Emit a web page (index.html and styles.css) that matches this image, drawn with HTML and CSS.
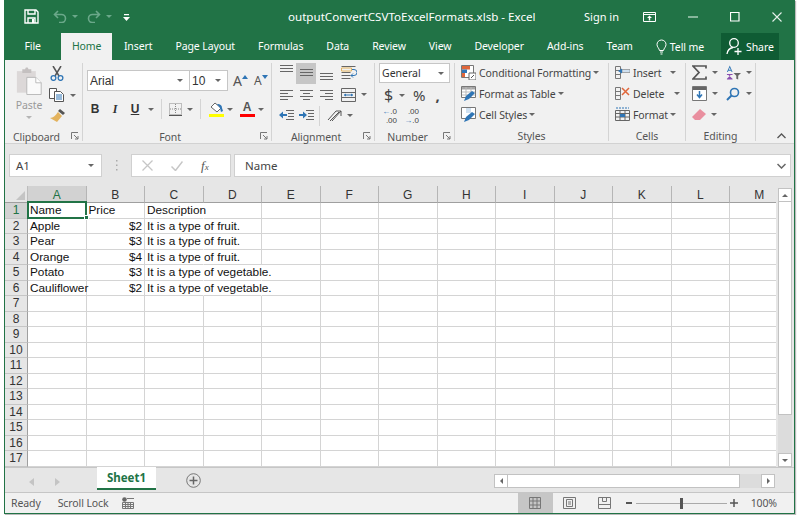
FILE: index.html
```html
<!DOCTYPE html>
<html lang="en">
<head>
<meta charset="utf-8">
<title>outputConvertCSVToExcelFormats.xlsb - Excel</title>
<link rel="stylesheet" href="styles.css">
</head>
<body>
<div class="window">
  <header class="titlebar">
    <div class="qat">
      <svg class="qat-save" width="15" height="15" viewBox="0 0 15 15"><path d="M1 1h11l2 2v11H1z" fill="none" stroke="#fff" stroke-width="1.400"/><path d="M4 1v4h7V1M4 14V9h7v5" fill="none" stroke="#fff" stroke-width="1.400"/><path d="M8 10h2v4H8z" fill="#fff"/></svg>
      <svg class="qat-undo" width="14" height="13" viewBox="0 0 14 13"><path d="M5 1L1.500 4.500 5 8M2 4.500h6.500a4 4 0 0 1 0 8H6" fill="none" stroke="#6ba88a" stroke-width="1.600"/></svg>
      <i class="caret dim"></i>
      <svg class="qat-redo" width="14" height="13" viewBox="0 0 14 13"><path d="M9 1l3.500 3.500L9 8M12 4.500H5.500a4 4 0 0 0 0 8H8" fill="none" stroke="#6ba88a" stroke-width="1.600"/></svg>
      <i class="caret dim"></i>
      <svg class="qat-more" width="7" height="8" viewBox="0 0 7 8"><path d="M1 1h5v1.300H1zM0 4h7L3.500 8z" fill="#fff"/></svg>
    </div>
    <div class="doc-title">outputConvertCSVToExcelFormats.xlsb - Excel</div>
    <div class="winctl">
      <span class="signin">Sign in</span>
      <svg class="ctl-ribbon" width="13" height="10" viewBox="0 0 13 10"><path d="M.5.500h12v9H.500zM.500 2.500h12" fill="none" stroke="#fff"/><path d="M6.500 3.500L4 6h1.800v2.500h1.400V6H9z" fill="#fff"/></svg>
      <svg class="ctl-min" width="10" height="2" viewBox="0 0 10 2"><path d="M0 1h10" stroke="#a9cdb9" stroke-width="1.500"/></svg>
      <svg class="ctl-max" width="10" height="10" viewBox="0 0 10 10"><path d="M.5.500h8.500v8.500H.500z" fill="none" stroke="#fff" stroke-width="1.200"/></svg>
      <svg class="ctl-close" width="10" height="10" viewBox="0 0 10 10"><path d="M.5.500l9 9M9.500.500l-9 9" stroke="#e5f0ea" stroke-width="1.100"/></svg>
    </div>
  </header>

  <nav class="tabs">
    <span class="tab tab-file">File</span>
    <span class="tab active">Home</span>
    <span class="tab">Insert</span>
    <span class="tab">Page Layout</span>
    <span class="tab">Formulas</span>
    <span class="tab">Data</span>
    <span class="tab">Review</span>
    <span class="tab">View</span>
    <span class="tab">Developer</span>
    <span class="tab">Add-ins</span>
    <span class="tab">Team</span>
    <span class="tab tell">
      <svg width="11" height="16" viewBox="0 0 11 16"><path d="M3.500 11.500C3 9 1 8 1 5.500a4.500 4.500 0 0 1 9 0C10 8 8 9 7.500 11.500zM4 13h3M4.500 15h2" fill="none" stroke="#fff"/></svg>
      Tell me
    </span>
    <span class="share">
      <svg width="18" height="19" viewBox="0 0 18 19"><circle cx="8" cy="6" r="4.300" fill="none" stroke="#fff" stroke-width="1.300"/><path d="M1 17c.5-4 3-6 6-6.500M12 11v7M8.500 14.500h7" fill="none" stroke="#fff" stroke-width="1.300"/></svg>
      Share
    </span>
  </nav>

  <section class="ribbon">
    <div class="group g-clip">
      <div class="gbody clip-body">
        <div class="paste">
          <svg width="27" height="28" viewBox="0 0 30 30"><path d="M1 4h21v24H1z" fill="#dcd8d8"/><path d="M7 2h3l1-2h2l1 2h3v4H7z" fill="#c4c0c0"/><path d="M12 11h10l6 6v13H12z" fill="#fafafa" stroke="#b5b5b5"/><path d="M22 11v6h6" fill="#fff" stroke="#b5b5b5"/></svg>
          <span class="paste-label">Paste</span>
          <i class="caret dim-grey"></i>
        </div>
        <div class="clip-tools">
          <svg width="14" height="15" viewBox="0 0 14 15"><path d="M3 0l6 10M11 0L5 10" stroke="#555" stroke-width="1.500" fill="none"/><circle cx="3.500" cy="12" r="2.400" fill="none" stroke="#2f75b5" stroke-width="1.300"/><circle cx="10.500" cy="12" r="2.400" fill="none" stroke="#2f75b5" stroke-width="1.300"/></svg>
          <div class="clip-copy">
            <svg width="15" height="14" viewBox="0 0 15 14"><path d="M.5.500h7v10h-7z" fill="#fff" stroke="#555"/><path d="M5.500 3.500h6l3 3v7h-9z" fill="#fff" stroke="#555"/><path d="M7 7h6M7 9h6M7 11h6" stroke="#2f75b5"/></svg>
            <i class="caret"></i>
          </div>
          <svg width="15" height="13" viewBox="0 0 15 13"><path d="M10 0l5 4-2 2-5-4z" fill="#555"/><path d="M8 3l4 4-5 6-7-4c3 0 6-3 8-6z" fill="#e3b35e"/></svg>
        </div>
      </div>
      <div class="glabel">Clipboard</div>
      <svg class="launcher" width="8" height="8" viewBox="0 0 8 8"><path d="M.5 7V.500H7M3 3l4 4M7 4v3H4" fill="none" stroke="#777"/></svg>
    </div>

    <div class="group g-font">
      <div class="gbody font-body">
        <div class="font-row1">
          <div class="combo combo-font"><span>Arial</span><i class="caret"></i></div>
          <div class="combo combo-size"><span>10</span><i class="caret"></i></div>
          <div class="font-grow">A<svg width="6" height="4" viewBox="0 0 6 4"><path d="M3 0l3 4H0z" fill="#2f75b5"/></svg></div>
          <div class="font-shrink">A<svg width="6" height="4" viewBox="0 0 6 4"><path d="M3 4L0 0h6z" fill="#2f75b5"/></svg></div>
        </div>
        <div class="font-row2">
          <span class="fmt fmt-b">B</span>
          <span class="fmt fmt-i">I</span>
          <span class="fmt fmt-u">U</span>
          <i class="caret caret-u"></i>
          <i class="vsep"></i>
          <svg class="ic-border" width="13" height="13" viewBox="0 0 13 13"><path d="M.5.500h12v11H.500z" fill="none" stroke="#888" stroke-dasharray="1 1"/><path d="M6.500 1v10M1 6h11" stroke="#888" stroke-dasharray="1 1"/><path d="M0 12.500h13" stroke="#555"/></svg>
          <i class="caret caret-b"></i>
          <i class="vsep vsep-fill"></i>
          <span class="color-btn">
            <svg width="15" height="11" viewBox="0 0 15 11"><path d="M6 1l6 5-4 4-6-5z" fill="#fff" stroke="#666"/><path d="M8 2c3 0 5 1 5 4l1 3-2 1-1-4z" fill="#2f75b5"/></svg>
            <b class="bar yellow"></b>
          </span>
          <i class="caret"></i>
          <span class="color-btn color-a">
            <span class="a-glyph">A</span>
            <b class="bar red"></b>
          </span>
          <i class="caret"></i>
        </div>
      </div>
      <div class="glabel">Font</div>
      <svg class="launcher" width="8" height="8" viewBox="0 0 8 8"><path d="M.5 7V.500H7M3 3l4 4M7 4v3H4" fill="none" stroke="#777"/></svg>
    </div>

    <div class="group g-align">
      <div class="gbody align-body">
        <div class="arow">
          <span class="ib"><svg width="13" height="17" viewBox="0 0 13 17"><path d="M0 .500h13M0 3.500h13M0 6.500h13" stroke="#666"/></svg></span>
          <span class="ib ib-on"><svg width="13" height="17" viewBox="0 0 13 17"><path d="M0 4.500h13M0 7.500h13M0 10.500h13" stroke="#666"/></svg></span>
          <span class="ib"><svg width="13" height="17" viewBox="0 0 13 17"><path d="M0 8.500h13M0 11.500h13M0 14.500h13" stroke="#666"/></svg></span>
          <svg class="ic-wrap" width="16" height="15" viewBox="0 0 16 15"><path d="M.5.500h14M.5 6.500h9M.5 9.500h9M.5 12.500h9" stroke="#666"/><path d="M.5 2h10v3H.5z" fill="none" stroke="#e3b35e"/><path d="M11 3.500h2a2 2 0 0 1 0 6h-3l2-2m-2 2l2 2" fill="none" stroke="#2f75b5"/></svg>
        </div>
        <div class="arow">
          <span class="ib"><svg width="13" height="10" viewBox="0 0 13 10"><path d="M0 .500h13M0 3.500h8M0 6.500h13M0 9.500h8" stroke="#666"/></svg></span>
          <span class="ib"><svg width="13" height="10" viewBox="0 0 13 10"><path d="M0 .500h13M3 3.500h7M0 6.500h13M3 9.500h7" stroke="#666"/></svg></span>
          <span class="ib"><svg width="13" height="10" viewBox="0 0 13 10"><path d="M0 .500h13M5 3.500h8M0 6.500h13M5 9.500h8" stroke="#666"/></svg></span>
          <svg class="ic-wrap" width="15" height="14" viewBox="0 0 15 14"><path d="M.5.500h14v13H.500zM.5 4.500h14M.5 9.500h14" fill="none" stroke="#666"/><path d="M3 7h9" stroke="#2f75b5"/><path d="M3 7l2-1.500v3zM12 7l-2-1.500v3z" fill="#2f75b5"/></svg>
          <i class="caret"></i>
        </div>
        <div class="arow">
          <span class="ib"><svg width="15" height="11" viewBox="0 0 15 11"><path d="M7 .500h8M9 3.500h6M9 6.500h6M7 9.500h8" stroke="#666"/><path d="M0 5l4-3.500v2.500h4v2H4v2.500z" fill="#2f75b5"/></svg></span>
          <span class="ib"><svg width="15" height="11" viewBox="0 0 15 11"><path d="M7 .500h8M9 3.500h6M9 6.500h6M7 9.500h8" stroke="#666"/><path d="M8 5L4 1.500V4H0v2h4v2.500z" fill="#2f75b5"/></svg></span>
          <i class="vsep vsep-align"></i>
          <svg class="ic-orient" width="15" height="15" viewBox="0 0 15 15"><path d="M1 12L9 3M3 13l9-9M9 3h5v5M14 3L5 13" fill="none" stroke="#555"/></svg>
          <i class="caret"></i>
        </div>
      </div>
      <div class="glabel">Alignment</div>
      <svg class="launcher" width="8" height="8" viewBox="0 0 8 8"><path d="M.5 7V.500H7M3 3l4 4M7 4v3H4" fill="none" stroke="#777"/></svg>
    </div>

    <div class="group g-num">
      <div class="gbody num-body">
        <div class="combo combo-num"><span>General</span><i class="caret"></i></div>
        <div class="nrow nrow-sym">
          <span class="sym sym-dollar">$</span><i class="caret"></i>
          <span class="sym sym-pct">%</span>
          <span class="sym sym-comma">,</span>
        </div>
        <div class="nrow nrow-dec">
          <span class="dec"><em>←</em>.0<br>.00</span>
          <span class="dec">.00<br><em>→</em>.0</span>
        </div>
      </div>
      <div class="glabel">Number</div>
      <svg class="launcher" width="8" height="8" viewBox="0 0 8 8"><path d="M.5 7V.500H7M3 3l4 4M7 4v3H4" fill="none" stroke="#777"/></svg>
    </div>

    <div class="group g-styles">
      <div class="gbody list-body">
        <div class="litem">
          <svg width="15" height="15" viewBox="0 0 15 15"><path d="M.5.500h12v12H.500z" fill="#fff" stroke="#777"/><path d="M1 1h8v3.500H1z" fill="#e0663a"/><path d="M1 4.500h5V8H1z" fill="#2f75b5"/><path d="M1 8h3v4H1z" fill="#e0663a"/><path d="M8 8h7v7H8z" fill="#fff" stroke="#666"/><path d="M10 13l3-3" stroke="#555"/></svg>
          <span>Conditional Formatting</span><i class="caret"></i>
        </div>
        <div class="litem">
          <svg width="15" height="15" viewBox="0 0 15 15"><path d="M.5.500h14v11H.500z" fill="#fff" stroke="#777"/><path d="M1 1h13v2.500H1z" fill="#a6a6a6"/><path d="M5 1v10M10 1v10M1 6h13M1 9h13" stroke="#bbb"/><path d="M3 15l2-5 6-5 3 2-6 6z" fill="#2f75b5"/></svg>
          <span>Format as Table</span><i class="caret"></i>
        </div>
        <div class="litem">
          <svg width="15" height="15" viewBox="0 0 15 15"><path d="M.5.500h14v11H.500z" fill="#fff" stroke="#777"/><path d="M5 1l5 0v5H5z" fill="#cfe0f0"/><path d="M3 15l2-5 6-5 3 2-6 6z" fill="#2f75b5"/></svg>
          <span>Cell Styles</span><i class="caret"></i>
        </div>
      </div>
      <div class="glabel">Styles</div>
    </div>

    <div class="group g-cells">
      <div class="gbody list-body">
        <div class="litem">
          <svg width="15" height="15" viewBox="0 0 15 15"><path d="M.5 1.500h5v12h-5zM.5 5.500h5M.5 9.500h5" fill="none" stroke="#777"/><path d="M7 4.500h8v3H7z" fill="#cfe0f0" stroke="#777" stroke-width=".6"/><path d="M3 6l4-2.500v5z" fill="#2f75b5"/></svg>
          <span class="cell-insert">Insert</span><i class="caret"></i>
        </div>
        <div class="litem">
          <svg width="15" height="15" viewBox="0 0 15 15"><path d="M.5 1.500h5v12h-5zM.5 5.500h5M.5 9.500h5" fill="none" stroke="#777"/><path d="M7 2l7 7M14 2L7 9" stroke="#e0663a" stroke-width="1.500"/></svg>
          <span class="cell-delete">Delete</span><i class="caret"></i>
        </div>
        <div class="litem">
          <svg width="15" height="15" viewBox="0 0 15 15"><path d="M.5 3.500h14v10H.500zM.5 6.500h14M.5 10h14M5 3.500v10M10 3.500v10" fill="none" stroke="#666"/><path d="M1 1h13" stroke="#2f75b5" stroke-dasharray="2 1"/><path d="M5 7h5v3H5z" fill="#2f75b5"/></svg>
          <span>Format</span><i class="caret"></i>
        </div>
      </div>
      <div class="glabel">Cells</div>
    </div>

    <div class="group g-edit">
      <div class="gbody edit-body">
        <div class="erow">
          <svg class="e1" width="15" height="15" viewBox="0 0 15 15"><path d="M14 3.500V1H1l6 6.500L1 14h13v-2.500" fill="none" stroke="#555" stroke-width="1.700"/></svg>
          <i class="caret"></i>
          <span class="e2">
            <svg width="16" height="16" viewBox="0 0 16 16"><path d="M8 8h8l-3 3v4l-2-1v-3z" fill="#666"/><path d="M7 9v1H2.500L7 14v1H1v-1l4-4H1V9z" fill="#8a4fb0"/><path d="M4 0l3 7H6l-.500-1.500h-3L2 7H1zM3 4.500h2L4 2z" fill="#2f75b5"/></svg>
          </span>
          <i class="caret"></i>
        </div>
        <div class="erow">
          <svg class="e1" width="15" height="15" viewBox="0 0 15 15"><path d="M.5.500h14v14H.500z" fill="#fff" stroke="#777"/><path d="M1 1h13v3H1z" fill="#666"/><path d="M7.500 5v6M5 8.500l2.500 3 2.500-3" fill="none" stroke="#2f75b5" stroke-width="1.500"/></svg>
          <i class="caret"></i>
          <span class="e2">
            <svg width="14" height="14" viewBox="0 0 14 14"><circle cx="8.500" cy="5.500" r="4" fill="none" stroke="#2f75b5" stroke-width="1.600"/><path d="M5.500 8.500L1 13" stroke="#2f75b5" stroke-width="2"/></svg>
          </span>
          <i class="caret"></i>
        </div>
        <div class="erow">
          <svg class="e1" width="14" height="12" viewBox="0 0 14 12"><path d="M0 8l8-8 6 5-6 6H3z" fill="#e98f9f"/></svg>
          <i class="caret"></i>
        </div>
      </div>
      <div class="glabel">Editing</div>
    </div>
    <svg class="collapse" width="9" height="6" viewBox="0 0 9 6"><path d="M.5 5l4-4 4 4" fill="none" stroke="#555" stroke-width="1.300"/></svg>
  </section>

  <section class="formula">
    <div class="namebox"><span>A1</span><i class="caret"></i></div>
    <svg class="grip" width="3" height="11" viewBox="0 0 3 11"><path d="M1 0h1.500v1.500H1zM1 4.500h1.500V6H1zM1 9h1.500v1.500H1z" fill="#aaa"/></svg>
    <div class="fx-box">
      <svg class="fx-x" width="11" height="11" viewBox="0 0 11 11"><path d="M.5.500l10 10M10.500.500l-10 10" stroke="#c6c6c6" stroke-width="1.300"/></svg>
      <svg class="fx-c" width="12" height="10" viewBox="0 0 12 10"><path d="M.5 5.500l4 4 7-9" fill="none" stroke="#c6c6c6" stroke-width="1.500"/></svg>
      <span class="fx-f">f<small>x</small></span>
    </div>
    <div class="fx-input"><span>Name</span><svg width="9" height="6" viewBox="0 0 9 6"><path d="M.5 1l4 4 4-4" fill="none" stroke="#666" stroke-width="1.500"/></svg></div>
  </section>

  <section class="book">
    <div class="sheet-wrap">
      <div class="sheet">
        <div class="col-heads">
          <div class="corner"><svg width="9" height="9" viewBox="0 0 9 9"><path d="M9 0v9H0z" fill="#c4c4c4"/></svg></div>
          <span class="ch on">A</span><span class="ch">B</span><span class="ch">C</span><span class="ch">D</span><span class="ch">E</span><span class="ch">F</span><span class="ch">G</span><span class="ch">H</span><span class="ch">I</span><span class="ch">J</span><span class="ch">K</span><span class="ch">L</span><span class="ch last">M</span>
        </div>
        <div class="row"><b class="rh on">1</b><span class="c sel">Name</span><span class="c">Price</span><span class="c ov">Description</span><span class="c"></span><span class="c"></span><span class="c"></span><span class="c"></span><span class="c"></span><span class="c"></span><span class="c"></span><span class="c"></span><span class="c"></span><span class="c"></span></div>
        <div class="row"><b class="rh">2</b><span class="c">Apple</span><span class="c r">$2</span><span class="c ov">It is a type of fruit.</span><span class="c"></span><span class="c"></span><span class="c"></span><span class="c"></span><span class="c"></span><span class="c"></span><span class="c"></span><span class="c"></span><span class="c"></span><span class="c"></span></div>
        <div class="row"><b class="rh">3</b><span class="c">Pear</span><span class="c r">$3</span><span class="c ov">It is a type of fruit.</span><span class="c"></span><span class="c"></span><span class="c"></span><span class="c"></span><span class="c"></span><span class="c"></span><span class="c"></span><span class="c"></span><span class="c"></span><span class="c"></span></div>
        <div class="row"><b class="rh">4</b><span class="c">Orange</span><span class="c r">$4</span><span class="c ov">It is a type of fruit.</span><span class="c"></span><span class="c"></span><span class="c"></span><span class="c"></span><span class="c"></span><span class="c"></span><span class="c"></span><span class="c"></span><span class="c"></span><span class="c"></span></div>
        <div class="row"><b class="rh">5</b><span class="c">Potato</span><span class="c r">$3</span><span class="c ov">It is a type of vegetable.</span><span class="c ov"></span><span class="c"></span><span class="c"></span><span class="c"></span><span class="c"></span><span class="c"></span><span class="c"></span><span class="c"></span><span class="c"></span><span class="c"></span></div>
        <div class="row"><b class="rh">6</b><span class="c">Cauliflower</span><span class="c r">$2</span><span class="c ov">It is a type of vegetable.</span><span class="c ov"></span><span class="c"></span><span class="c"></span><span class="c"></span><span class="c"></span><span class="c"></span><span class="c"></span><span class="c"></span><span class="c"></span><span class="c"></span></div>
        <div class="row"><b class="rh">7</b><span class="c"></span><span class="c"></span><span class="c"></span><span class="c"></span><span class="c"></span><span class="c"></span><span class="c"></span><span class="c"></span><span class="c"></span><span class="c"></span><span class="c"></span><span class="c"></span><span class="c"></span></div>
        <div class="row"><b class="rh">8</b><span class="c"></span><span class="c"></span><span class="c"></span><span class="c"></span><span class="c"></span><span class="c"></span><span class="c"></span><span class="c"></span><span class="c"></span><span class="c"></span><span class="c"></span><span class="c"></span><span class="c"></span></div>
        <div class="row"><b class="rh">9</b><span class="c"></span><span class="c"></span><span class="c"></span><span class="c"></span><span class="c"></span><span class="c"></span><span class="c"></span><span class="c"></span><span class="c"></span><span class="c"></span><span class="c"></span><span class="c"></span><span class="c"></span></div>
        <div class="row"><b class="rh">10</b><span class="c"></span><span class="c"></span><span class="c"></span><span class="c"></span><span class="c"></span><span class="c"></span><span class="c"></span><span class="c"></span><span class="c"></span><span class="c"></span><span class="c"></span><span class="c"></span><span class="c"></span></div>
        <div class="row"><b class="rh">11</b><span class="c"></span><span class="c"></span><span class="c"></span><span class="c"></span><span class="c"></span><span class="c"></span><span class="c"></span><span class="c"></span><span class="c"></span><span class="c"></span><span class="c"></span><span class="c"></span><span class="c"></span></div>
        <div class="row"><b class="rh">12</b><span class="c"></span><span class="c"></span><span class="c"></span><span class="c"></span><span class="c"></span><span class="c"></span><span class="c"></span><span class="c"></span><span class="c"></span><span class="c"></span><span class="c"></span><span class="c"></span><span class="c"></span></div>
        <div class="row"><b class="rh">13</b><span class="c"></span><span class="c"></span><span class="c"></span><span class="c"></span><span class="c"></span><span class="c"></span><span class="c"></span><span class="c"></span><span class="c"></span><span class="c"></span><span class="c"></span><span class="c"></span><span class="c"></span></div>
        <div class="row"><b class="rh">14</b><span class="c"></span><span class="c"></span><span class="c"></span><span class="c"></span><span class="c"></span><span class="c"></span><span class="c"></span><span class="c"></span><span class="c"></span><span class="c"></span><span class="c"></span><span class="c"></span><span class="c"></span></div>
        <div class="row"><b class="rh">15</b><span class="c"></span><span class="c"></span><span class="c"></span><span class="c"></span><span class="c"></span><span class="c"></span><span class="c"></span><span class="c"></span><span class="c"></span><span class="c"></span><span class="c"></span><span class="c"></span><span class="c"></span></div>
        <div class="row"><b class="rh">16</b><span class="c"></span><span class="c"></span><span class="c"></span><span class="c"></span><span class="c"></span><span class="c"></span><span class="c"></span><span class="c"></span><span class="c"></span><span class="c"></span><span class="c"></span><span class="c"></span><span class="c"></span></div>
        <div class="row"><b class="rh">17</b><span class="c"></span><span class="c"></span><span class="c"></span><span class="c"></span><span class="c"></span><span class="c"></span><span class="c"></span><span class="c"></span><span class="c"></span><span class="c"></span><span class="c"></span><span class="c"></span><span class="c"></span></div>
      </div>
      <div class="vscroll">
        <span class="sb-btn"><i class="tri up"></i></span>
        <span class="vthumb"></span>
        <span class="sb-track"></span>
        <span class="sb-btn"><i class="tri down"></i></span>
      </div>
    </div>
    <div class="tabstrip">
      <svg class="nav-l" width="5" height="8" viewBox="0 0 5 8"><path d="M5 0v8L0 4z" fill="#c4c4c4"/></svg>
      <svg class="nav-r" width="5" height="8" viewBox="0 0 5 8"><path d="M0 0v8l5-4z" fill="#c4c4c4"/></svg>
      <span class="sheet-tab">Sheet1</span>
      <svg class="add-sheet" width="15" height="15" viewBox="0 0 15 15"><circle cx="7.500" cy="7.500" r="6.800" fill="none" stroke="#777"/><path d="M3.500 7.500h8M7.500 3.500v8" stroke="#666" stroke-width="1.500"/></svg>
      <div class="hscroll">
        <span class="sb-btn"><i class="tri left"></i></span>
        <span class="hthumb"></span>
        <span class="sb-track"></span>
        <span class="sb-btn"><i class="tri right"></i></span>
      </div>
    </div>
  </section>

  <footer class="status">
    <span class="st-ready">Ready</span>
    <span class="st-lock">Scroll Lock</span>
    <svg class="st-macro" width="12" height="12" viewBox="0 0 12 12"><circle cx="2.500" cy="2.500" r="2.300" fill="#666"/><path d="M5 1.500h7M.5 5.500h11v6H.500zM.5 7.500h11M.5 9.500h11M3.500 5.500v6M6 5.500v6M8.500 5.500v6" fill="none" stroke="#777"/></svg>
    <span class="st-views">
      <span class="vw vw-on"><svg width="13" height="12" viewBox="0 0 13 12"><path d="M.5.500h11v11H.500zM4 .500v11M8 .500v11M.5 4h11M.5 8h11" fill="none" stroke="#777"/></svg></span>
      <span class="vw"><svg width="14" height="12" viewBox="0 0 14 12"><path d="M.5.500h12v11H.500z" fill="none" stroke="#777"/><path d="M3.500 2.500h6v7h-6zM5 5h3M5 7h3" fill="none" stroke="#777"/></svg></span>
      <span class="vw"><svg width="13" height="12" viewBox="0 0 13 12"><path d="M.5.500h12v11H.500zM.5 7.500h12M4.500.500v4h4v-4" fill="none" stroke="#777"/></svg></span>
    </span>
    <span class="zoom">
      <i class="z-minus"></i>
      <span class="z-track"><i class="z-thumb"></i></span>
      <svg width="8" height="8" viewBox="0 0 8 8"><path d="M0 4h8M4 0v8" stroke="#555" stroke-width="1.500"/></svg>
      <span class="z-val">100%</span>
    </span>
  </footer>
</div>
</body>
</html>
```
FILE: styles.css
```css
* { box-sizing: border-box; }
html, body { margin: 0; padding: 0; background: #fff; overflow: hidden; }
body { width: 800px; height: 515px; padding-left: 4px; font-family: "Noto Sans", "Open Sans", sans-serif; }
i, b { display: block; font-style: normal; font-weight: normal; }

.window { width: 791px; height: 514px; display: flex; flex-direction: column; border: solid #217346; border-width: 0 1px 1px 1px; background: #f1f1f1; overflow: hidden; box-shadow: 1px 1px 1px #bbb; }

.caret { width: 0; height: 0; border: 3px solid transparent; border-top: 3px solid #666; border-bottom: 0; flex: none; }
.caret.dim { border-top-color: #6ba88a; }
.caret.dim-grey { border-top-color: #b5b5b5; }

/* title bar */
.titlebar { height: 33px; flex: none; background: #217346; display: flex; align-items: center; color: #fff; font-size: 11px; position: relative; }
.qat { display: flex; align-items: center; padding-left: 19px; width: 283px; }
.qat-undo { margin-left: 14px; }
.qat .caret { margin-left: 5px; }
.qat-redo { margin-left: 9px; }
.qat-more { margin-left: 11px; }
.doc-title { width: 296px; font-size: 11.600px; line-height: 31px; white-space: nowrap; }
.winctl { display: flex; align-items: center; flex: 1; }
.signin { font-size: 11px; line-height: 31px; }
.ctl-ribbon { margin-left: 24px; }
.ctl-min { margin-left: 32px; }
.ctl-max { margin-left: 32px; }
.ctl-close { margin-left: 32px; }

/* tabs */
.tabs { height: 27px; flex: none; background: #217346; display: flex; align-items: stretch; padding-left: 8px; color: #fff; font-size: 10.500px; letter-spacing: -.1px; }
.tab { padding: 0 11.500px; line-height: 26px; white-space: nowrap; }
.tab-file { margin-right: 8.500px; }
.tab.active { background: #f1f1f1; color: #217346; padding: 0 11px; }
.tell { display: flex; align-items: center; gap: 3px; padding-right: 17px; }
.share { width: 58px; background: #0f5c34; display: flex; align-items: center; gap: 2px; padding-left: 5px; line-height: 26px; }

/* ribbon */
.ribbon { height: 84px; flex: none; background: #f1f1f1; border-bottom: 1px solid #d2d2d2; display: flex; color: #444; font-size: 10.500px; letter-spacing: -.1px; position: relative; padding-top: 3px; }
.group { position: relative; flex: none; height: 78px; border-right: 1px solid #d4d4d4; display: flex; flex-direction: column; }
.gbody { height: 63px; flex: none; }
.glabel { text-align: center; font-size: 10.500px; line-height: 14px; margin-top: 4px; color: #555; }
.g-clip .glabel, .g-font .glabel, .g-align .glabel, .g-num .glabel { padding-right: 14px; }
.launcher { position: absolute; right: 3px; bottom: 1px; }
.collapse { position: absolute; right: 8px; bottom: 4px; }
.g-clip { width: 78px; }
.g-font { width: 189px; }
.g-align { width: 103px; }
.g-num { width: 80px; }
.g-styles { width: 154px; }
.g-cells { width: 77px; }
.g-edit { width: 70px; }

/* clipboard */
.clip-body { display: flex; padding-left: 11px; }
.paste { width: 26px; display: flex; flex-direction: column; align-items: center; padding-top: 4px; color: #9a9a9a; flex: none; }
.paste svg { flex: none; }
.paste-label { margin-top: 3px; font-size: 10.500px; line-height: 14px; }
.paste .caret { margin-top: 4px; }
.clip-tools { display: flex; flex-direction: column; gap: 7px; padding: 3px 0 0 8px; }
.clip-copy { display: flex; align-items: center; gap: 6px; margin-left: -1px; }

/* font */
.font-body { padding: 7px 0 0 4px; }
.font-row1 { display: flex; align-items: center; height: 21px; }
.combo { height: 21px; background: #fff; border: 1px solid #c6c6c6; display: flex; align-items: center; justify-content: space-between; padding: 0 6px 0 2px; font-family: "Liberation Sans", sans-serif; font-size: 12px; letter-spacing: 0; color: #333; }
.combo-font { width: 102px; border-right: 0; }
.combo-size { width: 39px; }
.font-grow, .font-shrink { display: flex; align-items: flex-start; font-size: 14px; line-height: 18px; color: #555; }
.font-grow { margin-left: 5px; width: 21px; }
.font-shrink { font-size: 12px; }
.font-grow svg, .font-shrink svg { margin-top: 3px; }
.font-row2 { display: flex; align-items: center; height: 20px; margin-top: 8px; margin-left: -1px; }
.fmt { text-align: center; font-family: "Liberation Sans", sans-serif; font-size: 12px; color: #333; flex: none; }
.fmt-b { font-weight: bold; width: 18px; }
.fmt-i { font-family: "Liberation Serif", serif; font-style: italic; font-weight: bold; width: 22px; }
.fmt-u { text-decoration: underline; font-weight: bold; width: 18px; }
.font-row2 .caret { margin-left: 3px; }
.font-row2 .caret-u { margin-left: 4px; }
.font-row2 .caret-b { margin-left: 5px; }
.vsep { width: 1px; height: 20px; background: #d4d4d4; margin: 0 7px; flex: none; }
.color-btn { width: 16px; display: flex; flex-direction: column; align-items: center; flex: none; }
.color-a { margin-left: 6px; }
.bar { width: 15px; height: 3px; margin-top: 1px; }
.yellow { background: #ff0; }
.red { background: #f00; }
.a-glyph { font-size: 12px; line-height: 11px; font-weight: bold; color: #555; font-family: "Liberation Sans", sans-serif; }

/* alignment */
.arow { height: 21px; display: flex; align-items: center; padding-left: 4px; }
.ib { width: 20px; height: 21px; display: flex; align-items: center; justify-content: center; flex: none; }
.ib-on { background: #c6c6c6; }
.ic-wrap { margin-left: 5px; }
.arow .caret { margin-left: 5px; }
.vsep-align { margin: 0 7px 0 3px; }

/* number */
.num-body { padding: 0 0 0 4px; }
.combo-num { width: 71px; height: 20px; font-family: "Noto Sans", sans-serif; font-size: 10.500px; padding: 0 5px 0 2px; border-color: #c6c6c6; }
.nrow { display: flex; align-items: center; }
.nrow-sym { height: 22px; margin-top: 1px; padding-left: 5px; }
.nrow-sym .caret { margin-left: 2px; }
.sym { color: #444; }
.sym-dollar { font-size: 16px; width: 13px; }
.sym-pct { font-size: 15px; margin-left: 8px; }
.sym-comma { font-size: 15px; font-weight: bold; margin-left: 10px; line-height: 10px; }
.nrow-dec { height: 20px; padding-left: 1px; gap: 5px; }
.dec { font-family: "Liberation Sans", sans-serif; font-size: 8px; line-height: 9px; width: 17px; text-align: right; color: #444; letter-spacing: 0; white-space: nowrap; }
.dec em { font-style: normal; color: #2f75b5; }

/* list groups */
.list-body { margin-top: -1px; padding-left: 6px; }
.litem { height: 21px; display: flex; align-items: center; white-space: nowrap; }
.litem span { margin-left: 3px; }
.litem .caret { margin-left: 2px; }
.cell-insert { width: 35px; }
.cell-delete { width: 39px; }

/* editing */
.edit-body { padding: 0 0 0 6px; margin-top: -1px; }
.erow { height: 21px; display: flex; align-items: center; }
.erow .caret { margin-left: 5px; }
.e2 { margin-left: 8px; width: 15px; display: flex; }

/* formula */
.formula { height: 42px; flex: none; background: #e6e6e6; display: flex; padding: 10px 0 9px 4px; align-items: stretch; }
.namebox { width: 93px; background: #fff; border: 1px solid #d0d0d0; display: flex; align-items: center; justify-content: space-between; padding: 0 7px 0 6px; font-size: 11.500px; color: #444; }
.grip { align-self: center; margin: 0 13px; }
.fx-box { width: 100px; background: #fff; border: 1px solid #d0d0d0; display: flex; align-items: center; padding-left: 10px; }
.fx-c { margin-left: 18px; }
.fx-f { margin-left: 18px; font-family: "Liberation Serif", serif; font-style: italic; font-size: 13px; color: #555; }
.fx-f small { font-size: 9px; }
.fx-input { width: 557px; margin-left: 3px; background: #fff; border: 1px solid #d0d0d0; display: flex; align-items: center; justify-content: space-between; padding: 0 4px 0 10px; font-size: 11.500px; color: #444; }

/* sheet */
.book { flex: 1; display: flex; flex-direction: column; background: #e6e6e6; min-height: 0; }
.sheet-wrap { height: 281px; flex: none; display: flex; }
.sheet { width: 771px; background: #fff; font-family: "Liberation Sans", sans-serif; font-size: 11.800px; color: #111; overflow: hidden; flex: none; }
.col-heads { display: flex; height: 17px; background: #e6e6e6; }
.corner { width: 23px; flex: none; display: flex; align-items: flex-end; justify-content: flex-end; padding: 0 2px 2px 0; border-right: 1px solid #bdbdbd; border-bottom: 1px solid #9f9f9f; }
.ch { width: 58.500px; flex: none; text-align: center; font-size: 12px; line-height: 18px; color: #333; border-right: 1px solid #b5b5b5; border-bottom: 1px solid #9f9f9f; }
.ch.on { background: #d2d2d2; color: #217346; }
.ch.last { border-right: 0; }
.row { display: flex; height: 15.500px; }
.rh { width: 23px; flex: none; background: #e6e6e6; text-align: center; font-weight: normal; font-size: 12px; line-height: 15px; color: #333; border-right: 1px solid #9f9f9f; border-bottom: 1px solid #c6c6c6; }
.rh.on { background: #d2d2d2; color: #217346; }
.c { width: 58.500px; flex: none; line-height: 15px; padding: 0 2px; border-right: 1px solid #d4d4d4; border-bottom: 1px solid #d4d4d4; white-space: nowrap; }
.c.r { text-align: right; }
.c.ov { border-right-color: transparent; }
.c.sel { position: relative; z-index: 1; }
.c.sel::before { content: ""; position: absolute; top: -2px; left: -1px; right: -1px; bottom: -1px; border: 2px solid #217346; }
.c.sel::after { content: ""; position: absolute; right: -3px; bottom: -2px; background: #217346; border: 1px solid #fff; box-sizing: content-box; width: 3px; height: 3px; }
.vscroll { width: 14px; margin-left: 2px; margin-top: 2px; display: flex; flex-direction: column; background: #dcdcdc; flex: none; }
.sb-btn { width: 14px; height: 14px; background: #fff; border: 1px solid #c2c2c2; display: flex; align-items: center; justify-content: center; flex: none; }
.vthumb { height: 213px; background: #fff; border: 1px solid #c2c2c2; border-top: 0; flex: none; }
.sb-track { flex: 1; }
.tri { width: 0; height: 0; border: 3px solid transparent; }
.tri.up { border-top: 0; border-bottom-color: #666; }
.tri.down { border-bottom: 0; border-top-color: #666; }
.tri.left { border-left: 0; border-right-color: #666; }
.tri.right { border-right: 0; border-left-color: #666; }

.tabstrip { flex: 1; display: flex; align-items: flex-start; border-top: 1px solid #c6c6c6; }
.nav-l { margin: 10px 0 0 24px; flex: none; }
.nav-r { margin: 10px 0 0 21px; flex: none; }
.sheet-tab { width: 59px; height: 23px; margin: -1px 0 0 37px; background: #fff; color: #217346; font-weight: bold; font-size: 11.500px; line-height: 22px; text-align: center; border-bottom: 2px solid #217346; flex: none; }
.add-sheet { margin: 5px 0 0 30px; flex: none; }
.hscroll { display: flex; width: 281px; height: 14px; margin: 6px 0 0 293px; background: #dcdcdc; flex: none; }
.hthumb { width: 232px; background: #fff; border: 1px solid #c2c2c2; border-left: 0; flex: none; }

/* status */
.status { height: 21px; flex: none; display: flex; align-items: center; border-top: 1px solid #c6c6c6; background: #f1f1f1; color: #555; font-size: 10.500px; letter-spacing: -.1px; padding: 0 17px 0 6px; white-space: nowrap; }
.st-lock { margin-left: 17px; }
.st-macro { margin-left: 13px; }
.st-views { display: flex; align-items: center; margin-left: auto; height: 20px; }
.vw { width: 34.500px; height: 20px; display: flex; align-items: center; justify-content: center; }
.vw-on { background: #c6c6c6; }
.zoom { display: flex; align-items: center; height: 20px; }
.z-minus { width: 6px; height: 2px; background: #555; margin-left: 4px; }
.z-track { width: 91px; height: 1px; background: #aaa; margin: 0 3px 0 4px; position: relative; }
.z-thumb { position: absolute; left: 44px; top: -5px; width: 3px; height: 11px; background: #555; }
.z-val { margin-left: 13px; }
```
